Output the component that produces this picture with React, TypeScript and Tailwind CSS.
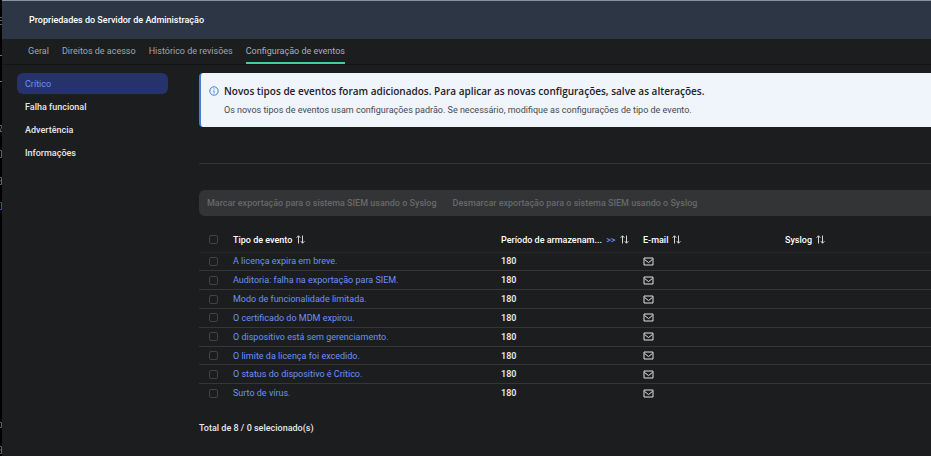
import { useState } from 'react';
import type { ReactNode } from 'react';

const TABS = ['Geral', 'Direitos de acesso', 'Histórico de revisões', 'Configuração de eventos'];

const SEVERITIES = ['Crítico', 'Falha funcional', 'Advertência', 'Informações'];

const EVENTS = [
  { name: 'A licença expira em breve.', days: 180 },
  { name: 'Auditoria: falha na exportação para SIEM.', days: 180 },
  { name: 'Modo de funcionalidade limitada.', days: 180 },
  { name: 'O certificado do MDM expirou.', days: 180 },
  { name: 'O dispositivo está sem gerenciamento.', days: 180 },
  { name: 'O limite da licença foi excedido.', days: 180 },
  { name: 'O status do dispositivo é Crítico.', days: 180 },
  { name: 'Surto de vírus.', days: 180 },
];

export default function App() {
  const [tab, setTab] = useState('Configuração de eventos');
  const [severity, setSeverity] = useState('Crítico');
  const [selected, setSelected] = useState<string[]>([]);

  function toggle(name: string) {
    setSelected((old) => (old.includes(name) ? old.filter((n) => n !== name) : [...old, name]));
  }

  return (
    <div className="flex min-h-screen overflow-hidden bg-[#1b1d1f] font-['Roboto',sans-serif] text-[9px] leading-3 text-[#e6e7e8]">
      <PageEdge />
      <div className="min-w-0 flex-1">
        <header className="flex h-[39px] items-center border-t border-[#87969c] bg-[#2d3644] px-[27px]">
          <h1 className="font-medium text-white">Propriedades do Servidor de Administração</h1>
        </header>

        <nav className="flex h-[26px] gap-[13px] border-b border-[#121416] px-[26px]">
          {TABS.map((t) => (
            <button
              key={t}
              onClick={() => setTab(t)}
              className={`border-b-2 ${tab === t ? 'border-[#3fcf9c] text-[#a9b0ba]' : 'border-transparent text-[#a0a6af]'}`}
            >
              {t}
            </button>
          ))}
        </nav>

        <div className="flex pt-2">
          <aside className="flex w-[197px] shrink-0 flex-col gap-0.5 pr-[31px] pl-[15px]">
            {SEVERITIES.map((s) => (
              <button
                key={s}
                onClick={() => setSeverity(s)}
                className={`h-[21px] rounded-md px-2 text-left ${
                  severity === s ? 'bg-[#25326c] text-[#6b93f5]' : 'font-medium'
                }`}
              >
                {s}
              </button>
            ))}
          </aside>

          <main className="min-w-0 flex-1">
            <div className="flex h-[54px] gap-[5px] rounded-l border-l-2 border-[#3f7fd6] bg-[#f0f4fb] pt-3 pl-2">
              <InfoIcon />
              <div className="whitespace-nowrap text-[#1d2129]">
                <p className="font-['Open_Sans',sans-serif] text-[10px] font-semibold">
                  Novos tipos de eventos foram adicionados. Para aplicar as novas configurações, salve as alterações.
                </p>
                <p className="mt-[7px] text-[#444a52]">
                  Os novos tipos de eventos usam configurações padrão. Se necessário, modifique as configurações de tipo de evento.
                </p>
              </div>
            </div>

            <hr className="mt-9 border-t border-[#33363b]" />

            <div className="mt-[26px] flex h-[26px] items-center gap-4 rounded-l-md bg-[#333436] px-2 font-medium text-[#68696b]">
              <button disabled>Marcar exportação para o sistema SIEM usando o Syslog</button>
              <button disabled>Desmarcar exportação para o sistema SIEM usando o Syslog</button>
            </div>

            <table className="mt-3 h-[174px] w-full table-fixed border-collapse text-left">
              <thead>
                <tr className="h-6 border-b border-[#2b2528]">
                  <th className="w-[34px] pl-[10px]">
                    <Checkbox
                      label="Selecionar todos"
                      checked={selected.length === EVENTS.length}
                      onChange={() => setSelected(selected.length === EVENTS.length ? [] : EVENTS.map((e) => e.name))}
                    />
                  </th>
                  <HeaderCell width="w-[268px]">Tipo de evento</HeaderCell>
                  <HeaderCell width="w-[142px]">
                    Período de armazenam... <a href="#" className="ml-0.5 text-[#6b93f5]">&gt;&gt;</a>
                  </HeaderCell>
                  <HeaderCell width="w-[142px]">E-mail</HeaderCell>
                  <HeaderCell>Syslog</HeaderCell>
                </tr>
              </thead>
              <tbody>
                {EVENTS.map((e) => (
                  <tr key={e.name} className="border-b border-[#343638] last:border-0">
                    <td className="pl-[10px]">
                      <Checkbox label={e.name} checked={selected.includes(e.name)} onChange={() => toggle(e.name)} />
                    </td>
                    <td>
                      <a href="#" className="text-[#6b93f5]">{e.name}</a>
                    </td>
                    <td className="font-semibold">{e.days}</td>
                    <td><MailIcon /></td>
                    <td />
                  </tr>
                ))}
              </tbody>
            </table>

            <p className="mt-5 font-medium">
              Total de {EVENTS.length} / {selected.length} selecionado(s)
            </p>
          </main>
        </div>
      </div>
    </div>
  );
}

function HeaderCell({ children, width = '' }: { children: ReactNode; width?: string }) {
  return (
    <th className={`font-medium whitespace-nowrap text-white ${width}`}>
      <span className="flex items-center gap-1">
        <span>{children}</span>
        <button aria-label="Ordenar"><SortIcon /></button>
      </span>
    </th>
  );
}

function Checkbox({ label, checked, onChange }: { label: string; checked: boolean; onChange: () => void }) {
  return (
    <input
      type="checkbox"
      aria-label={label}
      checked={checked}
      onChange={onChange}
      className="block size-[9px] appearance-none rounded-xs border border-[#414244] checked:bg-[#6b93f5]"
    />
  );
}

function SortIcon() {
  return (
    <svg width="9" height="9" viewBox="0 0 9 9" fill="none" stroke="#d4d5d6" className="block">
      <path d="M2.5 8.5V.8M.6 2.8 2.5.8l1.9 2M6.5.5v7.7M4.8 6.2l1.7 2 1.9-2" />
    </svg>
  );
}

function MailIcon() {
  return (
    <svg width="11" height="9" viewBox="0 0 11 9" fill="none" stroke="#e0e1e2" className="block">
      <path d="M1 1h9v7H1z" />
      <path d="m1.5 2.4 4 3.2 4-3.2" />
    </svg>
  );
}

function InfoIcon() {
  return (
    <svg width="10" height="10" viewBox="0 0 10 10" fill="none" stroke="#3f7fd6" className="mt-px shrink-0">
      <circle cx="5" cy="5" r="4.2" />
      <path d="M5 4.4v3M5 2.4v1.1" />
    </svg>
  );
}

// sliver of the page that stays visible beside the panel
function PageEdge() {
  return (
    <div className="w-0.5 shrink-0 bg-black">
      <svg width="2" height="456" viewBox="0 0 2 456" fill="none" className="block">
        <path d="M0 17.5h2M0 20.5h2M0 24.5h2M0 125.5h1.5v2L0 131.5h2M0 150.5h1.5v7H0M0 177.5h1.5v7H0M0 181h2M0 422.5h1.5v5H0M0 446.5h1.5v7H0M0 450h2" stroke="#606366" />
        <path d="M0 55.5h2M0 81.5h2" stroke="#1d9c74" />
        <path d="M0 202.5h1.5v7H0" stroke="#31549c" />
      </svg>
    </div>
  );
}
